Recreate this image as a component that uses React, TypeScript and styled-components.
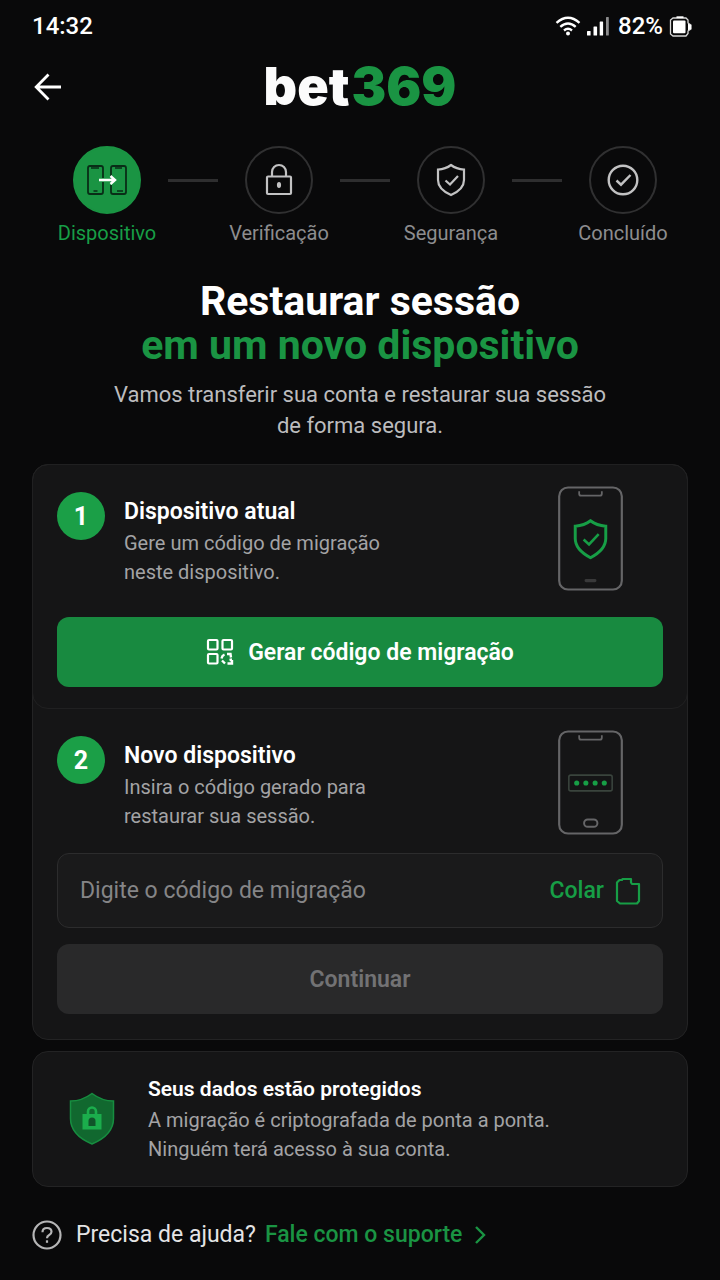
import React from "react";
import styled, { createGlobalStyle, css } from "styled-components";

const green = "#1a9443";
const brightGreen = "#179e46";

const GlobalStyle = createGlobalStyle`
  *, *::before, *::after { box-sizing: border-box; }
  html { background: #09090a; }
  body {
    margin: 0;
    background: #09090a;
    color: #ffffff;
    font-family: Roboto, "Liberation Sans", sans-serif;
  }
  h1, h2, p, ol { margin: 0; padding: 0; }
  button, input { font-family: inherit; }
`;

const Screen = styled.div`
  min-height: 100vh;
  padding: 0 32px 24px;
`;

const StatusBar = styled.div`
  display: flex;
  align-items: center;
  justify-content: space-between;
  height: 52px;
  font-size: 24px;
  font-weight: 500;
`;

const StatusIcons = styled.div`
  display: flex;
  align-items: center;
  margin-right: -4px;
  gap: 6px;

  span { margin-left: 2px; }
`;

const Header = styled.header`
  display: grid;
  grid-template-columns: 32px 1fr 32px;
  align-items: center;
  height: 70px;
`;

const BackButton = styled.button`
  display: flex;
  padding: 0;
  border: 0;
  background: none;
  color: #ffffff;
  cursor: pointer;
`;

const Logo = styled.div`
  color: #fbfbfb;
  font-family: Inter, Roboto, sans-serif;
  font-size: 52px;
  font-weight: 900;
  line-height: 64px;
  text-align: center;

  span {
    margin-left: 2px;
    color: ${green};
  }
`;

const Steps = styled.ol`
  display: flex;
  margin: 24px 13px 0 23px;
  list-style: none;
`;

const Step = styled.li<{ $active?: boolean }>`
  display: flex;
  flex: 0 0 104px;
  flex-direction: column;
  align-items: center;
  color: ${(p) => (p.$active ? brightGreen : "#8d8d8f")};
  font-size: 20px;
  line-height: 24px;
`;

const StepCircle = styled.div<{ $active?: boolean }>`
  display: flex;
  align-items: center;
  justify-content: center;
  width: 68px;
  height: 68px;
  margin-bottom: 7px;
  border: 2px solid ${(p) => (p.$active ? green : "#303031")};
  border-radius: 50%;
  background: ${(p) => (p.$active ? green : "transparent")};
  color: #c2c2c3;
`;

const StepLine = styled.li`
  flex: 1;
  height: 3px;
  margin: 33px 9px 0;
  background: #2e2e2f;
`;

const Intro = styled.section`
  padding-top: 34px;
  text-align: center;
`;

const Title = styled.h1`
  font-size: 41px;
  font-weight: 700;
  line-height: 44px;

  span {
    display: block;
    color: ${green};
  }
`;

const Subtitle = styled.p`
  max-width: 520px;
  margin: 12px auto 0;
  color: #bcbcbe;
  font-size: 22px;
  line-height: 31px;
`;

const Card = styled.section`
  border: 1px solid #232324;
  border-radius: 16px;
  background: #151516;
`;

const TransferCard = styled(Card)`
  margin-top: 23px;
`;

const Stage = styled.div<{ $divided?: boolean }>`
  padding: 21px 24px 25px;

  ${(p) =>
    p.$divided &&
    css`
      margin: -1px -1px 0;
      padding-bottom: 21px;
      border: 1px solid #202021;
      border-radius: 16px;
    `}
`;

const StageHead = styled.div`
  display: flex;
  align-items: flex-start;
  height: 105px;
`;

const StageNumber = styled.div`
  display: flex;
  flex: none;
  align-items: center;
  justify-content: center;
  width: 48px;
  height: 48px;
  margin: 6px 19px 0 0;
  border-radius: 50%;
  background: #1b9f47;
  font-size: 25px;
  font-weight: 700;
`;

const StageText = styled.div`
  flex: 1;
  padding-top: 11px;
`;

const ItemTitle = styled.h2<{ $small?: boolean }>`
  font-size: ${(p) => (p.$small ? 21 : 23)}px;
  font-weight: 600;
  line-height: 30px;
`;

const ItemText = styled.p`
  max-width: 290px;
  margin-top: 2px;
  color: #a3a3a5;
  font-size: 20px;
  line-height: 29px;
`;

const PhoneArt = styled.svg`
  flex: none;
  margin-right: 40px;
`;

const PrimaryButton = styled.button`
  display: flex;
  align-items: center;
  justify-content: center;
  gap: 14px;
  width: 100%;
  height: 70px;
  border: 0;
  border-radius: 12px;
  background: #188a40;
  color: #ffffff;
  font-size: 23px;
  font-weight: 600;
  cursor: pointer;

  &:disabled {
    background: #29292a;
    color: #727274;
    cursor: default;
  }
`;

const GenerateButton = styled(PrimaryButton)`
  margin-top: 26px;
`;

const CodeField = styled.div`
  display: flex;
  align-items: center;
  height: 75px;
  margin: 18px 0 16px;
  padding: 0 21px 0 22px;
  border: 1px solid #2c2c2d;
  border-radius: 12px;
  background: #1a1a1b;
`;

const CodeInput = styled.input`
  flex: 1;
  min-width: 0;
  padding: 0;
  border: 0;
  outline: 0;
  background: none;
  color: #ffffff;
  font-size: 23px;

  &::placeholder {
    color: #858587;
    opacity: 1;
  }
`;

const PasteButton = styled.button`
  display: flex;
  align-items: center;
  gap: 11px;
  padding: 0;
  border: 0;
  background: none;
  color: ${brightGreen};
  font-size: 23px;
  font-weight: 500;
  cursor: pointer;
`;

const ProtectionCard = styled(Card)`
  display: flex;
  align-items: center;
  gap: 32px;
  margin-top: 11px;
  padding: 22px 35px;

  p { max-width: none; }
`;

const Footer = styled.footer`
  display: flex;
  align-items: center;
  margin-top: 32px;
  color: #e4e4e5;
  font-size: 23px;
  line-height: 32px;

  svg { flex: none; }
  > span { margin: 0 9px 0 14px; }
`;

const SupportLink = styled.a`
  display: flex;
  align-items: center;
  gap: 12px;
  color: ${green};
  font-weight: 500;
  text-decoration: none;
`;

const WifiIcon = () => (
  <svg width="26" height="20" viewBox="0 0 26 20" fill="none" stroke="#fff" strokeWidth="2.4" aria-hidden="true">
    <path d="M1.500 6.800Q13-3.400 24.500 6.800" />
    <path d="M5.300 10.800Q13 4 20.700 10.800" />
    <path d="M9 14.500Q13 11.200 17 14.500" />
    <circle cx="13" cy="17.600" r="2" fill="#fff" stroke="none" />
  </svg>
);

const SignalIcon = () => (
  <svg width="23" height="20" viewBox="0 0 23 20" fill="#fff" aria-hidden="true">
    <rect x="0" y="15" width="3.600" height="4.500" rx=".6" />
    <rect x="6.500" y="10.500" width="3.600" height="9" rx=".6" />
    <rect x="12.700" y="5.500" width="3.400" height="14" rx=".6" />
    <rect x="19" y="1" width="2.800" height="18.500" rx=".6" fill="#8c8c8d" />
  </svg>
);

const BatteryIcon = () => (
  <svg width="23" height="21" viewBox="0 0 23 21" fill="none" aria-hidden="true">
    <path d="M4 2h13l2 2v3l3 2v4l-3 2v2.500l-2 2.500H4l-2.500-2V4z" stroke="#d8d8d8" strokeWidth="1.300" />
    <path d="M19 7.500l3 1.500v4l-3 1.500z" fill="#fff" />
    <path d="M7.500 1.200h7" stroke="#fff" strokeWidth="1.800" />
    <rect x="4" y="4.500" width="12.500" height="12.800" rx="1" fill="#fff" />
  </svg>
);

const BackIcon = () => (
  <svg width="32" height="32" viewBox="0 0 32 32" fill="none" stroke="currentColor" strokeWidth="2.800" aria-hidden="true">
    <path d="M16.500 3.500L4.200 16l12.300 12.500M4.500 16H29" />
  </svg>
);

const DevicesIcon = () => (
  <svg width="42" height="32" viewBox="0 0 42 32" fill="none" aria-hidden="true">
    <g stroke="#092d17" strokeWidth="1.800">
      <path d="M17 14V4q0-2-2-2H4Q2 2 2 4v24q0 2 2 2h11q2 0 2-2V18" />
      <path d="M25 12V4q0-2 2-2h11q2 0 2 2v24q0 2-2 2H27q-2 0-2-2v-7" />
      <path d="M5 4h8M29 4h7M7.500 27h4M31 27h6" strokeWidth="1.500" />
    </g>
    <path d="M13 16h16M24.500 12l4.500 4-4.500 4" stroke="#fff" strokeWidth="2.400" />
  </svg>
);

const LockIcon = () => (
  <svg width="28" height="34" viewBox="0 0 28 34" fill="none" stroke="currentColor" strokeWidth="2.200" aria-hidden="true">
    <rect x="2" y="13.500" width="24" height="17.500" rx="1" />
    <path d="M7 13.500V9a7 7 0 0 1 14 0v4.500" />
    <ellipse cx="14" cy="22" rx="1" ry="1.900" />
  </svg>
);

const ShieldIcon = () => (
  <svg width="30" height="34" viewBox="0 0 30 34" fill="none" stroke="currentColor" strokeWidth="2.200" aria-hidden="true">
    <path d="M15 2c3.600 2.700 7.500 4.200 13 4.600V17c0 7-5 11.500-13 15C7 28.500 2 24 2 17V6.600C7.500 6.200 11.400 4.700 15 2z" />
    <path d="M9.500 17.500l4.500 4 8-8.500" />
  </svg>
);

const DoneIcon = () => (
  <svg width="34" height="34" viewBox="0 0 34 34" fill="none" stroke="currentColor" strokeWidth="2.400" aria-hidden="true">
    <circle cx="17" cy="17" r="14.300" />
    <path d="M10.500 17.500l4.500 4.200 9.500-9.700" />
  </svg>
);

const PhoneFrame = () => (
  <g stroke="#656567" fill="none">
    <rect x="1.200" y="1.200" width="63.600" height="103.600" rx="9" strokeWidth="2.200" />
    <path d="M21.500 5v2.500q0 2 2 2h19q2 0 2-2V5" strokeWidth="1.800" />
  </g>
);

const CurrentPhone = () => (
  <PhoneArt width="65" height="105" viewBox="0 0 66 106" aria-hidden="true">
    <PhoneFrame />
    <g fill="none" stroke={brightGreen} strokeWidth="3">
      <path d="M33 35c4.500 3.500 9 5 15.500 5.500V53c0 9-6 14.500-15.500 19.500C23.500 67.500 17.500 62 17.500 53V40.500C24 40 28.500 38.500 33 35z" />
      <path d="M26 54l5.500 5 9.800-10.500" strokeWidth="2.600" />
    </g>
    <rect x="27" y="94" width="12" height="3.500" rx="1.500" fill="#39393a" />
  </PhoneArt>
);

const NewPhone = () => (
  <PhoneArt width="65" height="105" viewBox="0 0 66 106" aria-hidden="true">
    <PhoneFrame />
    <rect x="11" y="45.500" width="44" height="16" rx="2" fill="none" stroke="#3a443d" strokeWidth="1.600" />
    <g fill={brightGreen}>
      <circle cx="19" cy="53.500" r="2.600" />
      <circle cx="28.300" cy="53.500" r="2.600" />
      <circle cx="37.700" cy="53.500" r="2.600" />
      <circle cx="47" cy="53.500" r="2.600" />
    </g>
    <rect x="26.500" y="90.500" width="13.500" height="7.500" rx="3.700" fill="none" stroke="#656567" strokeWidth="2" />
  </PhoneArt>
);

const CodeIcon = () => (
  <svg width="28" height="28" viewBox="0 0 28 28" fill="none" stroke="#fff" strokeWidth="2.200" aria-hidden="true">
    <rect x="2" y="2" width="9.500" height="9.500" rx="1" />
    <rect x="16.500" y="2" width="9.500" height="9.500" rx="1" />
    <rect x="2" y="16" width="9.500" height="9.500" rx="1" />
    <path d="M15.500 20.500q.5-3 3-4M21 16h3.500l.5 3.500M16 22.500l3 3M21.500 25.500H26V22M26 21.500l-2.500.5" strokeWidth="2.400" />
  </svg>
);

const PasteIcon = () => (
  <svg width="26" height="28" viewBox="0 0 26 28" fill="none" stroke="currentColor" strokeWidth="2.200" strokeLinejoin="round" aria-hidden="true">
    <path d="M4.500 3H7l.5-1H16v3.500l1 1.500h7v17l-2 2.500H5L2 24V5.500z" />
  </svg>
);

const ProtectedIcon = () => (
  <svg width="48" height="54" viewBox="0 0 48 54" aria-hidden="true">
    <path d="M24 1.500C30 6 37 9 45.500 9v17.500C45.500 39 37 46.500 24 52 11 46.500 2.500 39 2.500 26.500V9C11 9 18 6 24 1.500z" fill="#11682f" stroke="#178d40" strokeWidth="1.500" />
    <path d="M20 23v-3.500a4 4 0 0 1 8 0V23" fill="none" stroke="#1bad4c" strokeWidth="2.600" />
    <path d="M14.500 22h19v15.500h-19z" fill="#1bad4c" />
    <path d="M20.500 34v-5q0-3.500 3.500-3.500t3.500 3.500v5z" fill="#10552a" />
  </svg>
);

const HelpIcon = () => (
  <svg width="30" height="30" viewBox="0 0 30 30" fill="none" stroke="#b5b5b6" strokeWidth="2.200" aria-hidden="true">
    <circle cx="15" cy="15" r="13.500" />
    <path d="M10.500 12.200q0-4.200 4.500-4.200t4.500 3.800q0 1.900-2.300 3.100-2.200 1.200-2.200 3.300" />
    <path d="M15 20.300v2.500" />
  </svg>
);

const ChevronIcon = () => (
  <svg width="12" height="20" viewBox="0 0 12 20" fill="none" stroke="currentColor" strokeWidth="2.400" aria-hidden="true">
    <path d="M2 2l8 8-8 8" />
  </svg>
);

const steps = [
  { label: "Dispositivo", icon: <DevicesIcon /> },
  { label: "Verificação", icon: <LockIcon /> },
  { label: "Segurança", icon: <ShieldIcon /> },
  { label: "Concluído", icon: <DoneIcon /> },
];

export default function App() {
  return (
    <>
      <GlobalStyle />
      <Screen>
        <StatusBar>
          <span>14:32</span>
          <StatusIcons>
            <WifiIcon />
            <SignalIcon />
            <span>82%</span>
            <BatteryIcon />
          </StatusIcons>
        </StatusBar>

        <Header>
          <BackButton type="button" aria-label="Voltar">
            <BackIcon />
          </BackButton>
          <Logo>
            bet<span>369</span>
          </Logo>
        </Header>

        <main>
          <Steps>
            {steps.map((step, index) => (
              <React.Fragment key={step.label}>
                {index > 0 && <StepLine aria-hidden="true" />}
                <Step $active={index === 0} aria-current={index === 0 ? "step" : undefined}>
                  <StepCircle $active={index === 0}>{step.icon}</StepCircle>
                  {step.label}
                </Step>
              </React.Fragment>
            ))}
          </Steps>

          <Intro>
            <Title>
              Restaurar sessão <span>em um novo dispositivo</span>
            </Title>
            <Subtitle>Vamos transferir sua conta e restaurar sua sessão de forma segura.</Subtitle>
          </Intro>

          <TransferCard>
            <Stage $divided>
              <StageHead>
                <StageNumber>1</StageNumber>
                <StageText>
                  <ItemTitle>Dispositivo atual</ItemTitle>
                  <ItemText>Gere um código de migração neste dispositivo.</ItemText>
                </StageText>
                <CurrentPhone />
              </StageHead>
              <GenerateButton type="button">
                <CodeIcon />
                Gerar código de migração
              </GenerateButton>
            </Stage>
            <Stage>
              <StageHead>
                <StageNumber>2</StageNumber>
                <StageText>
                  <ItemTitle>Novo dispositivo</ItemTitle>
                  <ItemText>Insira o código gerado para restaurar sua sessão.</ItemText>
                </StageText>
                <NewPhone />
              </StageHead>
              <CodeField>
                <CodeInput type="text" aria-label="Código de migração" placeholder="Digite o código de migração" />
                <PasteButton type="button">
                  Colar
                  <PasteIcon />
                </PasteButton>
              </CodeField>
              <PrimaryButton type="button" disabled>
                Continuar
              </PrimaryButton>
            </Stage>
          </TransferCard>

          <ProtectionCard>
            <ProtectedIcon />
            <div>
              <ItemTitle $small>Seus dados estão protegidos</ItemTitle>
              <ItemText>
                A migração é criptografada de ponta a ponta.
                <br />
                Ninguém terá acesso à sua conta.
              </ItemText>
            </div>
          </ProtectionCard>
        </main>

        <Footer>
          <HelpIcon />
          <span>Precisa de ajuda?</span>
          <SupportLink href="#suporte">
            Fale com o suporte
            <ChevronIcon />
          </SupportLink>
        </Footer>
      </Screen>
    </>
  );
}
